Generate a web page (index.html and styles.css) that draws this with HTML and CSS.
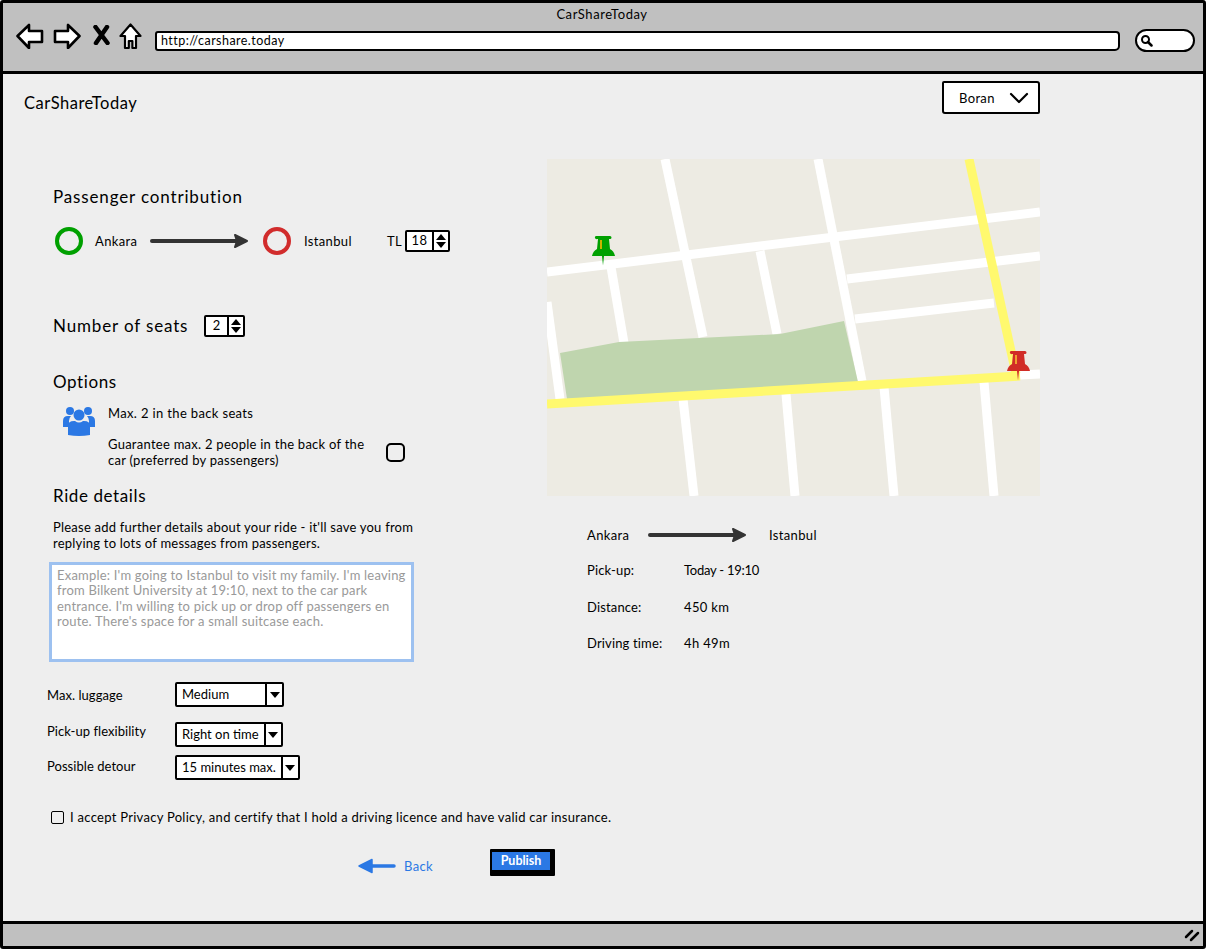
FILE: index.html
```html
<!DOCTYPE html>
<html lang="en">
<head>
  <meta charset="UTF-8" />
  <title>CarShareToday</title>
  <link rel="stylesheet" href="styles.css">
</head>
<body>
  <div class="window">
    <div class="chrome">
      <div class="chrome-title">CarShareToday</div>
      <div class="toolbar">
        <svg class="nav-back" width="28" height="26" viewBox="0 0 28 26"><path d="M1.500 13 13 2v6h13v11H13v6z" fill="#fff" stroke="#000" stroke-width="2.600" stroke-linejoin="round"/></svg>
        <svg class="nav-forward" width="28" height="26" viewBox="0 0 28 26"><path d="M26.500 13 15 2v6H2v11h13v6z" fill="#fff" stroke="#000" stroke-width="2.600" stroke-linejoin="round"/></svg>
        <svg class="nav-stop" width="17" height="20" viewBox="0 0 17 20"><path d="M2.500 2 14.500 18M14 2 3 18" fill="none" stroke="#000" stroke-width="4.500" stroke-linecap="round"/></svg>
        <svg class="nav-home" width="23" height="27" viewBox="0 0 23 27"><path d="M11.500 1.500 1.500 13h4.500v12h3.800v-7h3.600v7H17V13h4.500z" fill="#fff" stroke="#000" stroke-width="2.200" stroke-linejoin="round"/></svg>
        <div class="url-bar">http://carshare.today</div>
        <div class="search-box">
          <svg width="13" height="13" viewBox="0 0 13 13"><circle cx="5.500" cy="5.500" r="3.500" fill="none" stroke="#000" stroke-width="2"/><path d="M8 8l3.500 3.500" stroke="#000" stroke-width="2.500" stroke-linecap="round"/></svg>
        </div>
      </div>
    </div>

    <div class="content">
      <div class="header">
        <div class="brand">CarShareToday</div>
        <div class="user-menu">
          <span>Boran</span>
          <svg width="20" height="12" viewBox="0 0 20 12"><path d="M2 2l8 8 8-8" fill="none" stroke="#000" stroke-width="2.200" stroke-linecap="round" stroke-linejoin="round"/></svg>
        </div>
      </div>

      <div class="columns">
        <div class="form-col">
          <h2 class="heading heading-first">Passenger contribution</h2>
          <div class="route-row">
            <span class="ring ring-green"></span>
            <span class="route-city route-from">Ankara</span>
            <svg class="route-arrow" width="100" height="16" viewBox="0 0 100 16"><path d="M2 8h92" stroke="#333" stroke-width="4" stroke-linecap="round"/><path d="M85 2l12 6-12 6 2-6z" fill="#333" stroke="#333" stroke-width="2" stroke-linejoin="round"/></svg>
            <span class="ring ring-red"></span>
            <span class="route-city route-to">Istanbul</span>
            <span class="currency">TL</span>
            <div class="spinner spinner-price">
              <span class="spinner-value">18</span>
              <span class="spinner-arrows"><i class="tri-up"></i><i class="tri-down"></i></span>
            </div>
          </div>

          <div class="seats-row">
            <h2 class="heading">Number of seats</h2>
            <div class="spinner spinner-seats">
              <span class="spinner-value">2</span>
              <span class="spinner-arrows"><i class="tri-up"></i><i class="tri-down"></i></span>
            </div>
          </div>

          <h2 class="heading heading-options">Options</h2>
          <div class="options">
            <svg class="people-icon" width="32" height="30" viewBox="0 0 32 30" fill="#2b78e4">
              <circle cx="7" cy="5" r="4"/><circle cx="25" cy="5" r="4"/><circle cx="16" cy="9" r="5.500"/>
              <path d="M0 21v-6q0-5 5-5h3q-2 2-2 5v6zM32 21v-6q0-5-5-5h-3q2 2 2 5v6z"/>
              <path d="M5 29v-9q0-5 6-5h1q4 3 8 0h1q6 0 6 5v9q-11 2-22 0z"/>
            </svg>
            <div class="option-text">
              <div class="option-title">Max. 2 in the back seats</div>
              <div class="option-desc">
                <span>Guarantee max. 2 people in the back of the car (preferred by passengers)</span>
                <span class="check-round"></span>
              </div>
            </div>
          </div>

          <h2 class="heading heading-details">Ride details</h2>
          <p class="details-help">Please add further details about your ride - it'll save you from replying to lots of messages from passengers.</p>
          <div class="details-input">Example: I'm going to Istanbul to visit my family. I'm leaving from Bilkent University at 19:10, next to the car park entrance. I'm willing to pick up or drop off passengers en route. There's space for a small suitcase each.</div>

          <div class="select-row select-luggage">
            <label>Max. luggage</label>
            <div class="select select-medium"><span>Medium</span><b><i class="tri-down"></i></b></div>
          </div>
          <div class="select-row select-flex">
            <label>Pick-up flexibility</label>
            <div class="select"><span>Right on time</span><b><i class="tri-down"></i></b></div>
          </div>
          <div class="select-row select-detour">
            <label>Possible detour</label>
            <div class="select"><span>15 minutes max.</span><b><i class="tri-down"></i></b></div>
          </div>

          <div class="accept-row">
            <span class="check-square"></span>
            <span>I accept Privacy Policy, and certify that I hold a driving licence and have valid car insurance.</span>
          </div>

          <div class="actions">
            <a class="back-link">
              <svg width="38" height="16" viewBox="0 0 38 16"><path d="M12 8h24" stroke="#2b78e4" stroke-width="3.500" stroke-linecap="round"/><path d="M1 8 14 1.500v13z" fill="#2b78e4" stroke="#2b78e4" stroke-width="1.500" stroke-linejoin="round"/></svg>
              <span>Back</span>
            </a>
            <button class="publish" type="button">Publish</button>
          </div>
        </div>

        <div class="side-col">
          <svg class="map" width="493" height="337" viewBox="0 0 493 337">
            <rect width="493" height="337" fill="#edebe3"/>
            <g fill="none" stroke="#fff" stroke-width="9">
              <path d="M0 113 493 53"/>
              <path d="M118 0 156 178"/>
              <path d="M271 0 315 222"/>
              <path d="M64 108 77 184"/>
              <path d="M213 92 230 175"/>
              <path d="M0 143 13 240"/>
              <path d="M300 120 493 97"/>
              <path d="M308 160 447 144"/>
              <path d="M136 240 147 337"/>
              <path d="M239 235 248 337"/>
              <path d="M337 228 347 337"/>
              <path d="M437 223 447 337"/>
              <path d="M473 216 493 215"/>
            </g>
            <polygon points="13,194 72,183 233,175 297,162 311,223 20,240" fill="#bfd5ae"/>
            <g fill="none" stroke="#fff96e" stroke-width="9">
              <path d="M0 245 473 217"/>
              <path d="M422 0 469 215"/>
            </g>
            <g fill="#00a000">
              <path d="M49 77h14a1.500 1.500 0 0 1 0 3h-1l1 10q4 2 5 7H45q1-5 5-7l1-10h-1a1.500 1.500 0 0 1-1-3zM55 97h2l-1 9.500z"/>
              <rect x="53" y="81" width="2" height="9" fill="#c9b400"/>
            </g>
            <g fill="#d12c26">
              <path d="M464 192h14a1.500 1.500 0 0 1 0 3h-1l1 10q4 2 5 7h-23q1-5 5-7l1-10h-1a1.500 1.500 0 0 1-1-3zM470 212h2l-1 9.500z"/>
              <rect x="468" y="196" width="2" height="9" fill="#f0a030"/>
            </g>
          </svg>

          <div class="trip">
            <div class="trip-route">
              <span class="trip-from">Ankara</span>
              <svg width="100" height="16" viewBox="0 0 100 16"><path d="M2 8h92" stroke="#333" stroke-width="4" stroke-linecap="round"/><path d="M85 2l12 6-12 6 2-6z" fill="#333" stroke="#333" stroke-width="2" stroke-linejoin="round"/></svg>
              <span class="trip-to">Istanbul</span>
            </div>
            <dl class="trip-facts">
              <dt>Pick-up:</dt><dd class="fact-time">Today - 19:10</dd>
              <dt>Distance:</dt><dd>450 km</dd>
              <dt>Driving time:</dt><dd>4h 49m</dd>
            </dl>
          </div>
        </div>
      </div>
    </div>

    <div class="statusbar">
      <svg width="16" height="14" viewBox="0 0 16 14"><path d="M2 9 8 3M7 12l7-7" stroke="#000" stroke-width="2.500" stroke-linecap="round"/></svg>
    </div>
  </div>
</body>
</html>
```

FILE: styles.css
```css
* {
  box-sizing: border-box;
}
html, body {
  margin: 0;
  height: 100%;
}
body {
  font-family: "Lato", "Noto Sans", sans-serif;
  font-size: 13px;
  letter-spacing: 0.35px;
  color: #000;
  background: #fff;
}

.window {
  height: 949px;
  display: flex;
  flex-direction: column;
  border: 3px solid #000;
  border-radius: 3px;
  background: #eee;
  overflow: hidden;
}

/* browser bar */
.chrome {
  height: 71px;
  flex: none;
  background: #c0c0c0;
  border-bottom: 3px solid #000;
}
.chrome-title {
  text-align: center;
  font-size: 13px;
  line-height: 16px;
  letter-spacing: 0.55px;
  padding: 3px 2px 0 0;
}
.toolbar {
  display: flex;
  align-items: flex-start;
  padding-left: 13px;
  margin-top: 1px;
}
.nav-forward { margin-left: 9px; }
.nav-stop { margin: 2px 0 0 12px; }
.nav-home { margin-left: 9px; }
.url-bar {
  width: 965px;
  height: 20px;
  margin: 8px 0 0 13px;
  padding-left: 4px;
  background: #fff;
  border: 2.500px solid #000;
  border-radius: 3px 4px 5px 3px;
  font-size: 12.500px;
  letter-spacing: 0.45px;
  line-height: 15px;
}
.search-box {
  width: 60px;
  height: 23px;
  margin: 6px 0 0 15px;
  padding: 3px 0 0 3px;
  background: #fff;
  border: 2.500px solid #000;
  border-radius: 12px;
  line-height: 0;
}

/* page */
.content {
  flex: 1;
  min-height: 0;
}
.header {
  height: 85px;
  display: flex;
  align-items: flex-start;
  padding: 7px 163px 0 21px;
}
.brand {
  font-size: 16.500px;
  letter-spacing: 0.5px;
  line-height: 20px;
  margin-top: 12px;
}
.user-menu {
  width: 98px;
  height: 33px;
  margin-left: auto;
  display: flex;
  align-items: center;
  padding-left: 15px;
  gap: 14px;
  background: #fff;
  border: 2.500px solid #000;
  border-radius: 2px 3px 2px 3px;
  font-size: 13px;
}

.columns {
  display: grid;
  grid-template-columns: 500px 493px;
  padding-left: 44px;
}

.heading {
  margin: 0 0 0 6px;
  font-size: 17px;
  font-weight: 400;
  line-height: 20px;
  letter-spacing: 0.85px;
}
.heading-first { margin-top: 28px; }

.route-row {
  height: 22px;
  margin: 23px 0 0 8px;
  display: flex;
  align-items: center;
}
.ring {
  width: 28px;
  height: 28px;
  flex: none;
  border-radius: 50%;
  border-width: 4px;
  border-style: solid;
  background: #eee;
}
.ring-green { border-color: #00a000; }
.ring-red { border-color: #d12c2c; }
.route-from { margin-left: 12px; width: 43px; }
.route-arrow { margin: 0 13px 0 12px; flex: none; }
.route-to { margin-left: 13px; width: 56px; }
.currency { margin-left: 27px; width: 18px; }

.spinner {
  height: 22px;
  display: flex;
  flex: none;
  background: #fff;
  border: 2.500px solid #000;
  border-radius: 2px;
}
.spinner-price { width: 45px; }
.spinner-seats { width: 41px; }
.spinner-value {
  flex: 1;
  text-align: center;
  line-height: 17px;
  border-right: 2px solid #000;
}
.spinner-arrows {
  width: 14px;
  display: flex;
  flex-direction: column;
  align-items: center;
  justify-content: center;
  gap: 2px;
}
.tri-up, .tri-down {
  display: block;
  width: 0;
  height: 0;
  border-left: 5px solid transparent;
  border-right: 5px solid transparent;
}
.tri-up { border-bottom: 6px solid #000; }
.tri-down { border-top: 6px solid #000; }

.seats-row {
  height: 22px;
  margin-top: 63px;
  display: flex;
  align-items: center;
  gap: 16px;
}

.heading-options { margin-top: 35px; letter-spacing: 0.6px; }
.options {
  display: flex;
  margin: 13px 0 0 16px;
}
.people-icon {
  flex: none;
  margin-top: 1px;
}
.option-text {
  margin-left: 13px;
}
.option-title {
  line-height: 16px;
}
.option-desc {
  width: 297px;
  margin-top: 16px;
  display: flex;
  align-items: center;
  justify-content: space-between;
  line-height: 15.500px;
  letter-spacing: 0.26px;
}
.option-desc span:first-child {
  width: 262px;
  flex: none;
}
.check-round {
  width: 19px;
  height: 19px;
  flex: none;
  border: 2px solid #000;
  border-radius: 5px;
}

.heading-details { margin-top: 18px; letter-spacing: 0.6px; }
.details-help {
  width: 375px;
  margin: 13px 0 0 6px;
  line-height: 16px;
  letter-spacing: 0.22px;
}
.details-input {
  width: 365px;
  height: 100px;
  margin: 11px 0 0 2px;
  padding: 3px 5px;
  background: #fff;
  border: 3px solid #9dc1f0;
  color: #999;
  line-height: 15.400px;
  letter-spacing: 0.2px;
}

.select-row {
  display: flex;
  align-items: center;
}
.select-row label {
  width: 128px;
  flex: none;
  letter-spacing: 0.05px;
}
.select-luggage { margin-top: 20px; }
.select-flex { margin-top: 15px; }
.select-flex label { margin-bottom: 8px; }
.select-detour { margin-top: 8px; }
.select-detour label { margin-bottom: 3px; }
.select {
  height: 25px;
  display: flex;
  background: #fff;
  border: 2px solid #000;
  border-radius: 2px;
  letter-spacing: 0;
}
.select span {
  padding: 0 5px;
  line-height: 21px;
  white-space: nowrap;
}
.select-medium span {
  width: 88px;
}
.select b {
  width: 17px;
  display: flex;
  align-items: center;
  justify-content: center;
  border-left: 2px solid #000;
}

.accept-row {
  margin: 29px 0 0 4px;
  display: flex;
  align-items: center;
  gap: 6px;
  line-height: 16px;
  letter-spacing: 0.28px;
  white-space: nowrap;
}
.check-square {
  width: 13px;
  height: 13px;
  flex: none;
  border: 1.500px solid #000;
  border-radius: 2px;
}

.actions {
  display: flex;
  align-items: center;
  margin: 24px 0 0 311px;
}
.back-link {
  display: flex;
  align-items: center;
  gap: 8px;
  margin-top: 6px;
  color: #2b78e4;
}
.publish {
  width: 65px;
  height: 27px;
  flex: none;
  margin-left: 57px;
  padding: 0 0 2px;
  background: #2b78e4;
  border-style: solid;
  border-color: #000;
  border-width: 3px 5px 6px 2px;
  border-radius: 1px;
  color: #fff;
  font: inherit;
  font-size: 12.500px;
  font-weight: 700;
  letter-spacing: 0;
}

/* right column */
.map {
  display: block;
}
.trip {
  padding-left: 40px;
}
.trip-route {
  height: 16px;
  margin-top: 31px;
  display: flex;
  align-items: center;
}
.trip-from { width: 61px; }
.trip-to { margin-left: 21px; }
.trip-facts {
  display: grid;
  grid-template-columns: 97px auto;
  grid-auto-rows: 16px;
  row-gap: 20.500px;
  margin: 19px 0 0;
}
.trip-facts dt, .trip-facts dd {
  margin: 0;
  line-height: 16px;
}
.trip-facts dt {
  letter-spacing: 0.15px;
}
.trip-facts .fact-time {
  letter-spacing: -0.25px;
}

.statusbar {
  height: 25px;
  flex: none;
  display: flex;
  align-items: center;
  justify-content: flex-end;
  padding-right: 3px;
  background: #c0c0c0;
  border-top: 3px solid #000;
}
```
